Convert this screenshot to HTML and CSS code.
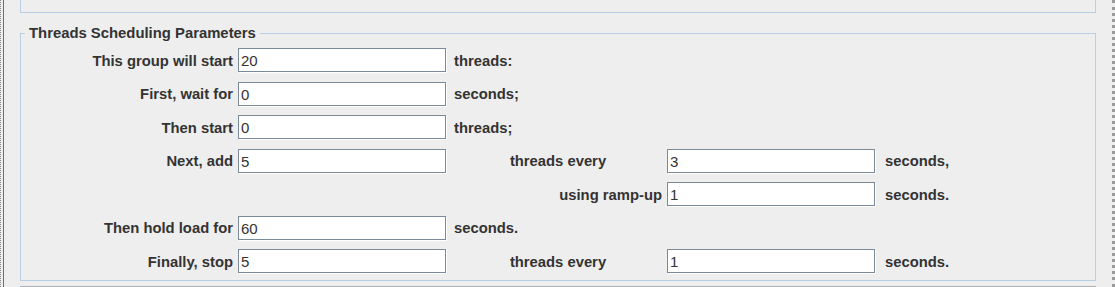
FILE: index.html
```html
<!DOCTYPE html>
<html lang="en">
<head>
    <meta charset="UTF-8">
    <title>Thread Group</title>
    <link rel="stylesheet" href="styles.css">
</head>
<body>
    <div class="frame">
        <div class="inner">
            <div class="top-panel"></div>

            <div class="group">
                <div class="group-title">Threads Scheduling Parameters</div>
                <div class="grid">
                    <label class="lbl">This group will start</label>
                    <input class="field" type="text" value="20">
                    <span class="unit">threads:</span>
                    <span></span><span></span>

                    <label class="lbl">First, wait for</label>
                    <input class="field" type="text" value="0">
                    <span class="unit">seconds;</span>
                    <span></span><span></span>

                    <label class="lbl">Then start</label>
                    <input class="field" type="text" value="0">
                    <span class="unit">threads;</span>
                    <span></span><span></span>

                    <label class="lbl">Next, add</label>
                    <input class="field" type="text" value="5">
                    <span class="unit mid">threads every</span>
                    <input class="field" type="text" value="3">
                    <span class="unit">seconds,</span>

                    <span></span><span></span>
                    <span class="unit right">using ramp-up</span>
                    <input class="field" type="text" value="1">
                    <span class="unit">seconds.</span>

                    <label class="lbl">Then hold load for</label>
                    <input class="field" type="text" value="60">
                    <span class="unit">seconds.</span>
                    <span></span><span></span>

                    <label class="lbl">Finally, stop</label>
                    <input class="field" type="text" value="5">
                    <span class="unit mid">threads every</span>
                    <input class="field" type="text" value="1">
                    <span class="unit">seconds.</span>
                </div>
            </div>

            <div class="bottom-line"></div>
        </div>
    </div>
</body>
</html>
```

FILE: styles.css
```css
html, body {
    margin: 0;
    height: 100%;
}
body {
    background: #eeeeee;
    font-family: "Liberation Sans", Arial, sans-serif;
    color: #333333;
    overflow: hidden;
}
.frame {
    height: 100%;
    border-left: 1px dotted #8a8a8a;
    border-right: 3px dotted #9a9a9a;
    box-sizing: border-box;
    width: 1115px;
}
.inner {
    height: 100%;
    margin-left: 2px;
    border-left: 1px solid #6f6f6f;
    padding-left: 16px;
    padding-right: 16px;
}
.top-panel {
    height: 12px;
    border: 1px solid #b8cfe5;
    border-top: none;
    width: 1074px;
}
.group {
    position: relative;
    margin-top: 20px;
    width: 1074px;
    height: 246px;
    border: 1px solid #b8cfe5;
}
.group-title {
    position: absolute;
    left: 4px;
    top: -10px;
    padding: 0 4px;
    background: #eeeeee;
    font-size: 14.85px;
    font-weight: bold;
    line-height: 18px;
}
.grid {
    display: grid;
    grid-template-columns: 217px 208px 221px 210px 1fr;
    grid-auto-rows: 24px;
    row-gap: 9.5px;
    padding-top: 14px;
    font-size: 14.8px;
    font-weight: bold;
}
.lbl {
    justify-self: end;
    align-self: center;
    padding-right: 5px;
    padding-top: 1px;
}
.unit {
    align-self: center;
    padding-left: 8px;
    padding-top: 1px;
}
.unit.mid {
    justify-self: center;
    padding-left: 3px;
}
.unit.right {
    justify-self: end;
    padding-right: 5px;
}
.field {
    box-sizing: border-box;
    width: 208px;
    height: 24px;
    margin: 0;
    padding: 1px 0 0 2px;
    border: 1px solid #7a8a99;
    background: #ffffff;
    box-shadow: 1px 1px 0 #ffffff;
    font-family: "Liberation Sans", Arial, sans-serif;
    font-size: 15px;
    color: #333333;
    outline: none;
}
.bottom-line {
    margin-top: 5px;
    width: 1076px;
    border-top: 1px solid #b0b0b0;
}
```
